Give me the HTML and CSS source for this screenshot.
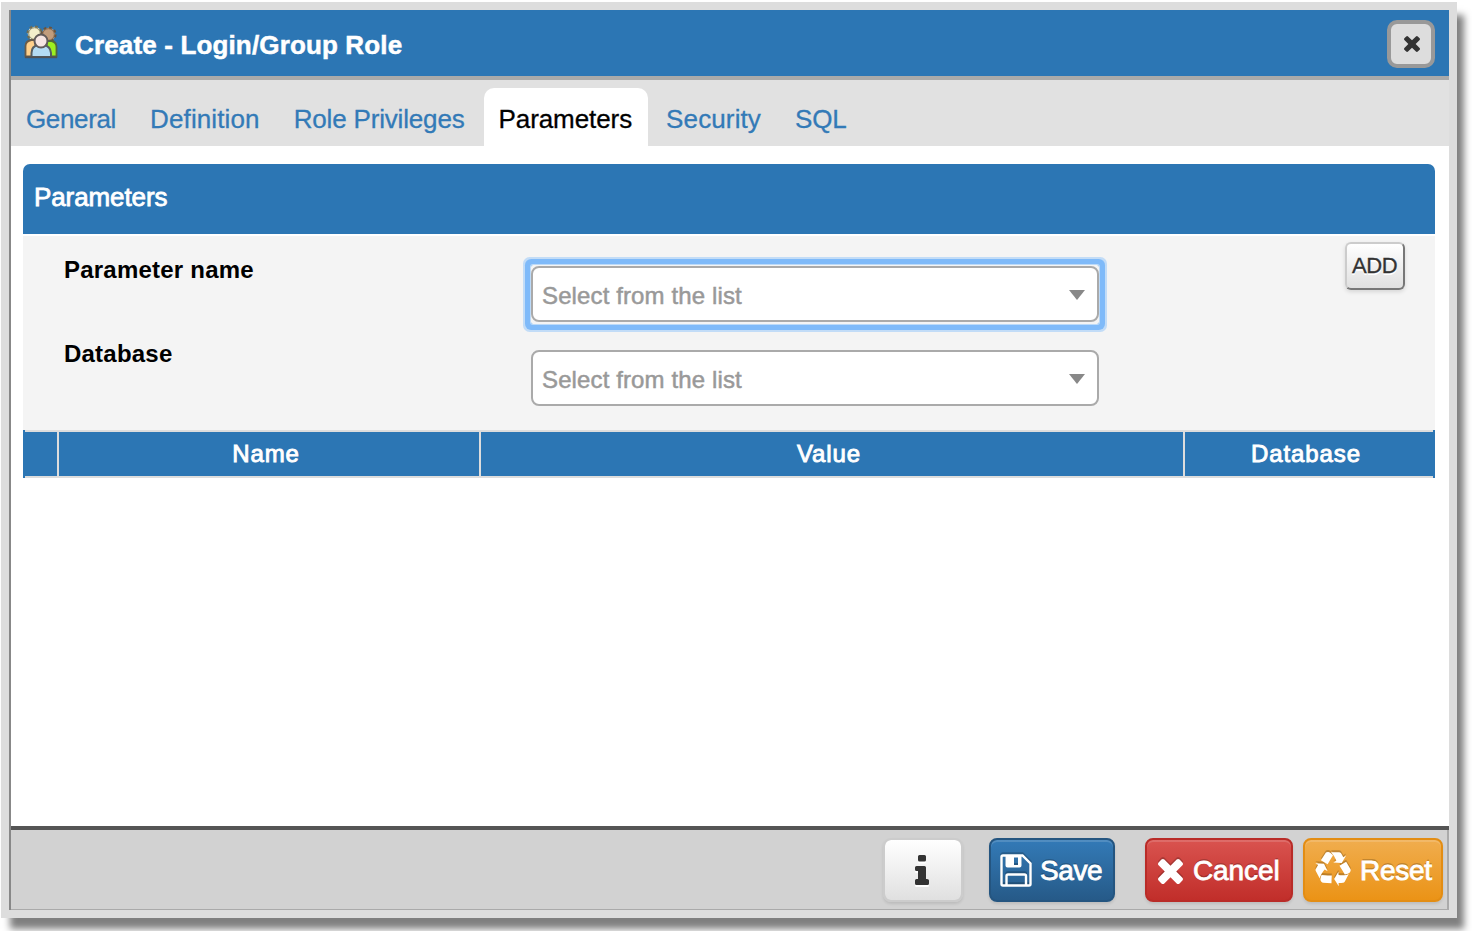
FILE: index.html
```html
<!DOCTYPE html>
<html lang="en">
<head>
<meta charset="utf-8">
<title>Create - Login/Group Role</title>
<link rel="stylesheet" href="styles.css">
</head>
<body>
<div class="dialog">
  <header class="titlebar">
    <svg class="role-icon" viewBox="0 0 34 34">
      <circle cx="10.500" cy="8.500" r="6.800" fill="#f4efcf" stroke="#6e6d55" stroke-width="2.600" stroke-dasharray="2.700 2.700"/>
      <circle cx="10.500" cy="8.500" r="5.800" fill="#f3eecb" stroke="#8b8a70" stroke-width="1"/>
      <circle cx="24.500" cy="9.500" r="6.800" fill="#bd9878" stroke="#67533f" stroke-width="2.600" stroke-dasharray="2.700 2.700"/>
      <circle cx="24.500" cy="9.500" r="5.800" fill="#c19c7b" stroke="#836b53" stroke-width="1"/>
      <path d="M1.500 31.500V21q0-5 6-6h4v16.500z" fill="#ffd08b" stroke="#695b48" stroke-width="1.800"/>
      <path d="M32.500 31.500V22q0-5-5-6h-5v15.500z" fill="#9bef20" stroke="#52683c" stroke-width="1.800"/>
      <path d="M7.500 32v-4q0-7 7-8h5q7 1 7.500 8v4z" fill="#b4dcf4" stroke="#555d62" stroke-width="2"/>
      <circle cx="17" cy="16" r="6.500" fill="#f6e5e2" stroke="#625b5a" stroke-width="2"/>
      <path d="M1 32.300h32" stroke="#505254" stroke-width="1.800"/>
    </svg>
    <h1 class="title">Create - Login/Group Role</h1>
    <button class="close" aria-label="Close"><svg class="close-icon" viewBox="302 366 1188 1188"><path d="M1490 1322q0 40-28 68l-136 136q-28 28-68 28t-68-28l-294-294-294 294q-28 28-68 28t-68-28l-136-136q-28-28-28-68t28-68l294-294-294-294q-28-28-28-68t28-68l136-136q28-28 68-28t68 28l294 294 294-294q28-28 68-28t68 28l136 136q28 28 28 68t-28 68l-294 294 294 294q28 28 28 68z"/></svg></button>
  </header>
  <nav class="tabs">
    <a class="tab tab-general">General</a>
    <a class="tab tab-wide">Definition</a>
    <a class="tab tab-role">Role Privileges</a>
    <a class="tab tab-active">Parameters</a>
    <a class="tab tab-wide">Security</a>
    <a class="tab">SQL</a>
  </nav>
  <main class="content">
    <h2 class="panel-title">Parameters</h2>
    <section class="form">
      <div class="labels">
        <label class="label">Parameter name</label>
        <label class="label">Database</label>
      </div>
      <div class="fields">
        <div class="field focused"><div class="select"><span>Select from the list</span><i class="caret"></i></div></div>
        <div class="field"><div class="select"><span>Select from the list</span><i class="caret"></i></div></div>
      </div>
      <button class="add">ADD</button>
    </section>
    <div class="grid-head">
      <div class="cell"></div>
      <div class="cell">Name</div>
      <div class="cell">Value</div>
      <div class="cell">Database</div>
    </div>
  </main>
  <footer class="footer">
    <button class="btn info" aria-label="Info"><svg class="info-icon" viewBox="0 0 14 31"><path d="M4.500 0h5q1.500 0 1.500 1.500v3.500q0 1.500-1.500 1.500h-5q-1.500 0-1.500-1.500v-3.500q0-1.500 1.500-1.500zM1.500 11h8q1.500 0 1.500 1.500v11.500h1q2 0 2 1.500v3q0 1.500-1.500 1.500h-11q-1.500 0-1.500-1.500v-3q0-1.500 1.500-1.500h1.500v-8h-1.500q-1.500 0-1.500-1.500v-2q0-1.500 1.500-1.500z"/></svg></button>
    <button class="btn save"><svg class="save-icon" viewBox="0 0 32 33"><path d="M3 1.500h19.500l8 8v20.500q0 1.500-1.500 1.500h-26q-1.500 0-1.500-1.500v-27q0-1.500 1.500-1.500z" fill="none" stroke="#fff" stroke-width="2.400"/><path d="M6.500 31v-9q0-1.500 1.500-1.500h16.500q1.500 0 1.500 1.500v9" fill="none" stroke="#fff" stroke-width="2.400"/><path d="M5.500 1.500v10q0 2 2 2h12q2 0 2-2v-10zM14 3.500h4v7.500h-4z" fill="#fff" fill-rule="evenodd"/></svg><span>Save</span></button>
    <button class="btn cancel"><svg class="cancel-icon" viewBox="302 366 1188 1188"><path d="M1490 1322q0 40-28 68l-136 136q-28 28-68 28t-68-28l-294-294-294 294q-28 28-68 28t-68-28l-136-136q-28-28-28-68t28-68l294-294-294-294q-28-28-28-68t28-68l136-136q28-28 68-28t68 28l294 294 294-294q28-28 68-28t68 28l136 136q28 28 28 68t-28 68l-294 294 294 294q28 28 28 68z"/></svg><span>Cancel</span></button>
    <button class="btn reset"><svg class="reset-icon" viewBox="0 0 1792 1792"><path d="M836 1169l-15 368-2 22-420-29q-36-3-67-31.500t-47-65.500q-11-27-14.500-55t4-65 12-55 21.500-64 19-53q78 12 509 28zm-387-586l180 379-147-92q-63 72-111.500 144.500t-72.500 125-39.500 94.500-18.500 63l-4 21-190-357q-17-26-18-56t6-47l8-18q35-63 114-188l-140-86zm1231 517l-188 359q-12 29-36.500 46.500t-43.500 20.500l-18 4q-71 7-219 12l8 164-230-367 211-362 7 173q170 16 283 5t170-33zm-785-924q-47 63-265 435l-317-187-19-12 225-356q20-31 60-45t80-10q24 2 48.500 12t42 21 41.500 33 36 34.500 36 39.500 32 35zm655 307l212 363q18 37 12.500 76t-27.500 74q-13 20-33 37t-38 28-48.500 22-47 16-51.500 14-46 12q-34-72-265-436l313-195zm-143-226l142-83-220 373-419-20 151-86q-34-89-75-166t-75.500-123.500-64.500-80-47-46.500l-17-13 405 1q31-3 58 10.500t39 28.500l11 15q39 61 112 190z"/></svg><span>Reset</span></button>
  </footer>
</div>
</body>
</html>
```

FILE: styles.css
```css
* { box-sizing: border-box; }
body {
  margin: 0;
  padding: 2px 0 0 1px;
  height: 931px;
  overflow: hidden;
  background: #fff;
  font-family: "Liberation Sans", Arial, sans-serif;
}
button { font-family: inherit; padding: 0; }
.dialog {
  width: 1456px;
  height: 916px;
  border: 8px solid #ddd;
  box-shadow: inset 2px 0 #888, 8px 12px 7px -1px rgba(0, 0, 0, .5);
  padding-left: 2px;
  display: flex;
  flex-direction: column;
}
.titlebar {
  height: 70px;
  flex: none;
  background: #2c76b4;
  border-bottom: 4px solid #aaa;
  display: flex;
  align-items: center;
  padding: 0 14px 0 13px;
}
.role-icon { width: 34px; height: 34px; margin-top: -2px; }
.title {
  margin: 3px auto 0 17px;
  color: #fff;
  font-size: 26px;
  line-height: 30px;
  letter-spacing: .15px;
  -webkit-text-stroke: .5px #fff;
}
.close {
  width: 48px;
  height: 48px;
  margin-top: 2px;
  border: 4px solid #999;
  border-radius: 10px;
  background: #ddd;
  display: flex;
  align-items: center;
  justify-content: center;
}
.close-icon { width: 16px; height: 16px; fill: #333; margin-left: 2px; }
.tabs {
  height: 66px;
  flex: none;
  background: #e1e1e1;
  display: flex;
  padding: 8px 0 0 0;
}
.tab {
  height: 58px;
  padding: 0 16px 0 15px;
  margin-right: 3px;
  border-radius: 10px 10px 0 0;
  color: #337ab7;
  font-size: 26px;
  line-height: 62px;
  letter-spacing: -.1px;
  white-space: nowrap;
  -webkit-text-stroke: .3px;
}
.tab-general { letter-spacing: -.35px; }
.tab-wide { letter-spacing: .12px; }
.tab-role { letter-spacing: -.17px; }
.tab-active { background: #fff; color: #000; letter-spacing: -.08px; }
.content {
  flex: 1;
  background: #fff;
  padding: 18px 14px 0 12px;
}
.panel-title {
  margin: 0 0 2px;
  height: 70px;
  padding-left: 11px;
  border-radius: 7px 7px 0 0;
  background: #2c76b4;
  color: #fff;
  font-size: 26px;
  font-weight: normal;
  line-height: 66px;
  letter-spacing: -.1px;
  -webkit-text-stroke: .8px #fff;
}
.form {
  height: 194px;
  background: #f4f4f4;
  display: flex;
}
.labels { width: 508px; padding: 20px 0 0 41px; }
.label {
  display: block;
  height: 84px;
  font-size: 24px;
  font-weight: bold;
  line-height: 28px;
  letter-spacing: .22px;
}
.fields { width: 568px; padding-top: 29px; }
.field { height: 59px; padding: 1px 0 2px; margin-bottom: 25px; }
.focused {
  border-radius: 2px;
  box-shadow: 0 0 0 1px #bcdaf8, 0 0 0 6px #7fbaf9, 0 0 0 8px #c2dcf7;
}
.select {
  height: 56px;
  border: 2px solid #aaa;
  border-radius: 8px;
  background: #fff;
  display: flex;
  align-items: center;
  justify-content: space-between;
  padding: 4px 12px 0 9px;
  color: #999;
  font-size: 24px;
  letter-spacing: .12px;
  -webkit-text-stroke: .5px;
}
.caret {
  border: 8px solid transparent;
  border-top: 10px solid #888;
  border-bottom: 0;
  margin-top: -2px;
}
.add {
  width: 60px;
  height: 48px;
  margin: 6px 0 0 246px;
  padding-right: 1px;
  border: 2px solid;
  border-color: #ccc #777 #777 #ccc;
  border-radius: 6px;
  background: linear-gradient(#fff, #e0e0e0);
  box-shadow: 0 2px 4px rgba(0, 0, 0, .12);
  color: #333;
  font-size: 22px;
  letter-spacing: -.4px;
  text-shadow: 0 2px #fff;
  -webkit-text-stroke: .3px;
}
.grid-head {
  height: 48px;
  border: solid #2c76b4;
  border-width: 0 2px;
  background: #2c76b4;
  display: grid;
  grid-template-columns: 34px 422px 704px 1fr;
}
.cell {
  border: solid #ddd;
  border-width: 2px 2px 2px 0;
  padding-right: 6px;
  color: #fff;
  font-size: 24px;
  line-height: 43px;
  text-align: center;
  letter-spacing: .9px;
  -webkit-text-stroke: .9px #fff;
}
.cell:last-child { border-right: 0; }
.footer {
  height: 84px;
  flex: none;
  border-top: 4px solid #555;
  background: #d2d2d2;
  box-shadow: inset -2px -1px #aaa;
  display: flex;
  padding: 8px 6px 0 0;
  justify-content: flex-end;
}
.btn {
  height: 64px;
  border: 2px solid;
  border-radius: 8px;
  display: flex;
  align-items: center;
  color: #fff;
  font-size: 28px;
  box-shadow: inset 0 2px rgba(255, 255, 255, .15), 0 2px 3px rgba(0, 0, 0, .1);
  text-shadow: 0 -2px rgba(0, 0, 0, .2);
  -webkit-text-stroke: .8px;
}
.btn svg { flex: none; overflow: visible; }
.btn span { padding-top: 2px; }
.info {
  width: 80px;
  margin-right: 26px;
  justify-content: center;
  border-color: #ccc;
  background: linear-gradient(#fff, #e0e0e0) padding-box;
}
.info-icon { width: 14px; height: 31px; fill: #333; margin: 0 2px 0 0; filter: drop-shadow(0 2px #fff); }
.save {
  width: 126px;
  margin-right: 30px;
  padding-left: 9px;
  border-color: #245580;
  background: linear-gradient(#337ab7, #265a88);
}
.save-icon { width: 32px; height: 33px; margin-right: 8px; }
.save span { letter-spacing: -.4px; }
.cancel {
  width: 148px;
  margin-right: 10px;
  padding-left: 11px;
  border-color: #b92c28;
  background: linear-gradient(#d9534f, #c12e2a);
}
.cancel-icon { width: 25px; height: 25px; margin: 3px 10px 0 0; fill: #fff; }
.cancel span { letter-spacing: -.1px; }
.reset {
  width: 140px;
  padding-left: 10px;
  border-color: #e38d13;
  background: linear-gradient(#f0ad4e, #eb9316);
}
.reset-icon { width: 36px; height: 36px; margin: 0 9px 0 0; fill: #fff; }
.reset span { letter-spacing: -.3px; }
.save-icon, .cancel-icon, .reset-icon { filter: drop-shadow(0 -2px rgba(0, 0, 0, .2)); }
```
